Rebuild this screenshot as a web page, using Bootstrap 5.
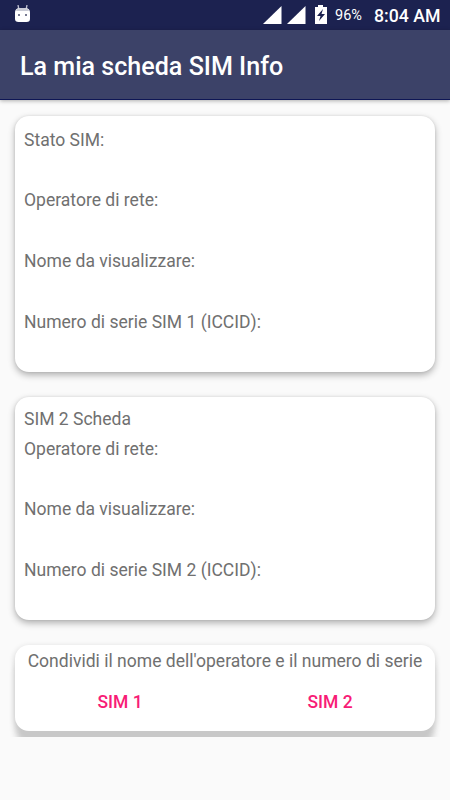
<!DOCTYPE html>
<html lang="it">
<head>
<meta charset="utf-8">
<meta name="viewport" content="width=device-width, initial-scale=1">
<title>La mia scheda SIM Info</title>
<link href="https://cdn.jsdelivr.net/npm/bootstrap@5.3.0/dist/css/bootstrap.min.css" rel="stylesheet">
<style>
body{font-family:Roboto,"Liberation Sans",sans-serif;background:#fafafa;height:800px;overflow:hidden;color:#707070;font-size:17.55px;line-height:24px}
.statusbar{height:30px;background:#1c2250;color:#fff}
.statusbar svg{display:block;flex:none}
.robot{margin-left:14px}
.signal{margin-right:5px}
.battery{margin:0 7px 0 8px}
.percent{font-size:14.5px;width:27px;white-space:nowrap;padding-top:2px}
.clock{font-size:17.7px;font-weight:500;margin-left:12px;width:76px;white-space:nowrap;padding-top:2px}
.appbar{height:70px;background:#3c4268;border-bottom:1px solid #0e1655;box-shadow:0 1px 4px rgba(0,0,0,.3);padding:5px 20px 0}
.apptitle{font-size:25.1px;font-weight:500;line-height:30px;color:#fff;white-space:nowrap}
.cards{height:637px;padding:15.5px 15px 0;overflow:hidden}
.info-card{border:0;border-radius:14px;background:#fff;color:inherit;box-shadow:0 3px 7px rgba(0,0,0,.3),0 0 3px rgba(0,0,0,.08);padding:12.4px 9px 0}
.card-one{height:256.5px;margin-bottom:25px}
.card-two{height:223px;margin-bottom:25px;padding-top:9.5px}
.card-share{height:86px;padding:3.5px 0 0;box-shadow:0 14px 6px -1px #c8c8c8,0 2px 6px rgba(0,0,0,.18)}
.field{height:60.6px;white-space:nowrap}
.sim-heading{height:30px}
.share-btn{color:#f81c76;font-size:17.5px;font-weight:500;line-height:24px;padding:0;border:0;margin-top:17px}
</style>
</head>
<body>
<header>
<div class="statusbar d-flex align-items-center">
<svg class="robot" width="17" height="20" viewBox="0 0 17 20"><path d="M4 0l1 5M13 0l-1 5" stroke="#bfc1d2" stroke-width="1.3"/><path d="M1 7.500Q1 3.500 5 3h7q4 .5 4 4.500V14q0 3-3.500 3h-8Q1 17 1 14z" fill="#fff"/><path d="M2 6q1-3 4-3h5q3 0 4 3z" fill="#c9cbd5"/><path d="M4 9h2v2H4zM11 9h2v2h-2z" fill="#777a91"/></svg>
<svg class="signal ms-auto" width="19" height="18" viewBox="0 0 19 18"><path d="M0 18L18.500 0v18z" fill="#fff"/></svg>
<svg width="19" height="18" viewBox="0 0 19 18"><path d="M0 18L18.500 0v18z" fill="#fff"/></svg>
<svg class="battery" width="14" height="20" viewBox="0 0 14 20"><path d="M4 0h5v2h4v17H1V2h3z" fill="#fff"/><path d="M9 4l-6 7h3.500L5 16l6-7H7.500z" fill="#1c2250"/></svg>
<span class="percent">96%</span>
<span class="clock">8:04 AM</span>
</div>
<nav class="appbar d-flex align-items-center"><h1 class="apptitle m-0">La mia scheda SIM Info</h1></nav>
</header>
<main class="cards">
<section class="card info-card card-one">
<div class="field">Stato SIM:</div>
<div class="field">Operatore di rete:</div>
<div class="field">Nome da visualizzare:</div>
<div class="field">Numero di serie SIM 1 (ICCID):</div>
</section>
<section class="card info-card card-two">
<div class="sim-heading">SIM 2 Scheda</div>
<div class="field">Operatore di rete:</div>
<div class="field">Nome da visualizzare:</div>
<div class="field">Numero di serie SIM 2 (ICCID):</div>
</section>
<section class="card info-card card-share text-center">
<div class="text-nowrap">Condividi il nome dell'operatore e il numero di serie</div>
<div class="row g-0">
<div class="col-6"><button type="button" class="btn share-btn">SIM 1</button></div>
<div class="col-6"><button type="button" class="btn share-btn">SIM 2</button></div>
</div>
</section>
</main>
<script src="https://cdn.jsdelivr.net/npm/bootstrap@5.3.0/dist/js/bootstrap.bundle.min.js"></script>
</body>
</html>
